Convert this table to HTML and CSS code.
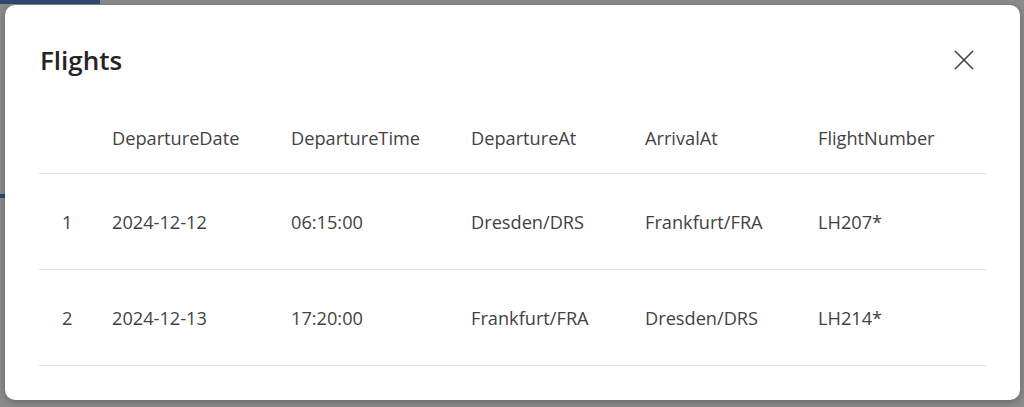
FILE: index.html
```html
<!DOCTYPE html>
<html>
<head>
<meta charset="utf-8">
<link rel="stylesheet" href="styles.css">
</head>
<body>
<div class="page">
  <div class="page-tab"></div>
  <div class="page-mark"></div>
</div>
<div class="backdrop">
  <div class="dialog">
    <div class="dialog-head">
      <h1 class="title">Flights</h1>
      <button class="close" aria-label="Close">
        <svg width="20" height="20" viewBox="0 0 20 20"><path d="M1 1L19 19M19 1L1 19" stroke="#424242" stroke-width="1.6" fill="none"/></svg>
      </button>
    </div>
    <div class="table">
      <div class="row head">
        <div></div><div>DepartureDate</div><div>DepartureTime</div><div>DepartureAt</div><div>ArrivalAt</div><div>FlightNumber</div>
      </div>
      <div class="row">
        <div class="idx">1</div><div>2024-12-12</div><div>06:15:00</div><div>Dresden/DRS</div><div>Frankfurt/FRA</div><div>LH207*</div>
      </div>
      <div class="row">
        <div class="idx">2</div><div>2024-12-13</div><div>17:20:00</div><div>Frankfurt/FRA</div><div>Dresden/DRS</div><div>LH214*</div>
      </div>
    </div>
  </div>
</div>
</body>
</html>
```
FILE: styles.css
```css
html, body {
  margin: 0;
  padding: 0;
  height: 100%;
  overflow: hidden;
}
body {
  background: #8a8a8a;
  font-family: "Open Sans", "Noto Sans", sans-serif;
  color: #424242;
}
.page {
  height: 100%;
  position: relative;
}
.page-tab {
  position: absolute;
  left: 0;
  top: 0;
  width: 100px;
  height: 4px;
  background: #2a4a72;
}
.page-mark {
  position: absolute;
  left: 0;
  top: 194px;
  width: 5px;
  height: 4px;
  background: #2a4a72;
}
.backdrop {
  position: absolute;
  inset: 0;
}
.dialog {
  position: absolute;
  left: 5px;
  top: 5px;
  width: 1015px;
  height: 395px;
  box-sizing: border-box;
  background: #fff;
  border-radius: 10px;
  padding: 37px 34px 0 34px;
  box-shadow: 0 2px 6px rgba(0,0,0,0.25);
}
.dialog-head {
  display: flex;
  align-items: center;
  justify-content: space-between;
  height: 36px;
}
.title {
  margin: 0 0 0 1px;
  font-size: 26px;
  font-weight: 600;
  line-height: 36px;
  color: #242424;
}
.close {
  border: 0;
  background: none;
  padding: 0;
  width: 20px;
  height: 20px;
  margin-right: 12px;
  display: flex;
}
.table {
  margin-top: 24px;
  font-size: 18.2px;
  line-height: 24px;
}
.row {
  display: grid;
  grid-template-columns: 73px 179px 180px 174px 173px 168px;
  padding: 36px 0 35px;
  border-bottom: 1px solid #e0e0e0;
}
.row.head {
  padding: 24px 0 23px;
}
.idx {
  padding-left: 23px;
}
```
